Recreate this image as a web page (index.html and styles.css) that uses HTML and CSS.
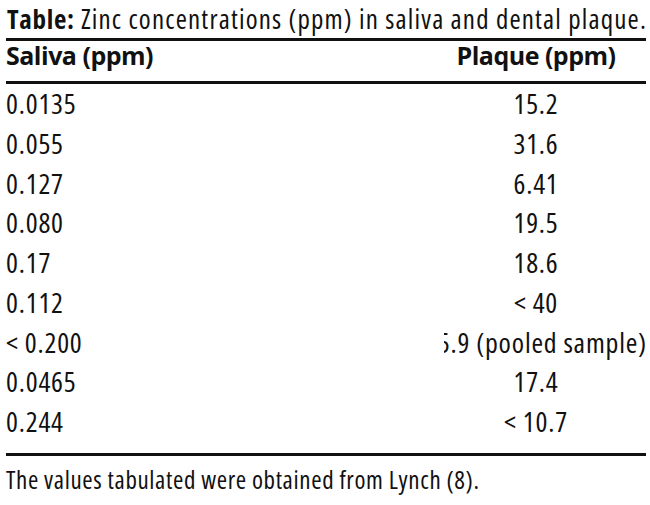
FILE: index.html
```html
<!DOCTYPE html>
<html lang="en">
<head>
<meta charset="utf-8">
<title>Zinc concentrations</title>
<link rel="stylesheet" href="styles.css">
</head>
<body>
<div class="page">
  <div class="caption"><b>Table:</b> Zinc concentrations (ppm) in saliva and dental plaque.</div>
  <div class="table">
    <div class="row head">
      <div class="c1">Saliva (ppm)</div>
      <div class="c2">Plaque (ppm)</div>
    </div>
    <div class="body">
      <div class="row"><div class="c1">0.0135</div><div class="c2">15.2</div></div>
      <div class="row"><div class="c1">0.055</div><div class="c2">31.6</div></div>
      <div class="row"><div class="c1">0.127</div><div class="c2">6.41</div></div>
      <div class="row"><div class="c1">0.080</div><div class="c2">19.5</div></div>
      <div class="row"><div class="c1">0.17</div><div class="c2">18.6</div></div>
      <div class="row"><div class="c1">0.112</div><div class="c2">&lt; 40</div></div>
      <div class="row"><div class="c1">&lt; 0.200</div><div class="c2 clip"><span class="over">15.9 (pooled sample)</span></div></div>
      <div class="row"><div class="c1">0.0465</div><div class="c2">17.4</div></div>
      <div class="row"><div class="c1">0.244</div><div class="c2">&lt; 10.7</div></div>
    </div>
  </div>
  <div class="note">The values tabulated were obtained from Lynch (8).</div>
</div>
</body>
</html>
```
FILE: styles.css
```css
html, body {
  margin: 0;
  padding: 0;
  background: #ffffff;
}
.page {
  width: 650px;
  height: 505px;
  padding: 0 4px 0 6px;
  box-sizing: border-box;
  overflow: hidden;
  font-family: "Open Sans", "Noto Sans", "Liberation Sans", sans-serif;
  font-stretch: 75%;
  font-weight: 400;
  color: #111111;
}
.caption {
  font-size: 27px;
  line-height: 37px;
  height: 37px;
  padding-bottom: 1px;
  padding-left: 1px;
  letter-spacing: 1.17px;
  white-space: nowrap;
}
.caption b {
  font-weight: 700;
  letter-spacing: 0.7px;
}
.table {
  border-top: 3px solid #111111;
}
.row {
  display: grid;
  grid-template-columns: 438px 1fr;
  height: 39.75px;
  line-height: 39.75px;
  font-size: 28px;
  letter-spacing: 0.8px;
}
.head {
  height: 28px;
  line-height: 28px;
  padding-bottom: 12px;
  font-size: 25px;
  font-weight: 700;
  font-stretch: 100%;
  letter-spacing: -0.5px;
  border-bottom: 3px solid #111111;
}
.body {
  padding-bottom: 11px;
  border-bottom: 3.5px solid #111111;
}
.c1 {
  white-space: nowrap;
}
.c2 {
  display: flex;
  justify-content: center;
  padding-right: 18px;
  white-space: nowrap;
}
.c2.clip {
  overflow: hidden;
}
.over {
  flex: none;
}
.note {
  font-size: 25px;
  line-height: 30px;
  margin-top: 8px;
  letter-spacing: 0.62px;
  white-space: nowrap;
}
```
